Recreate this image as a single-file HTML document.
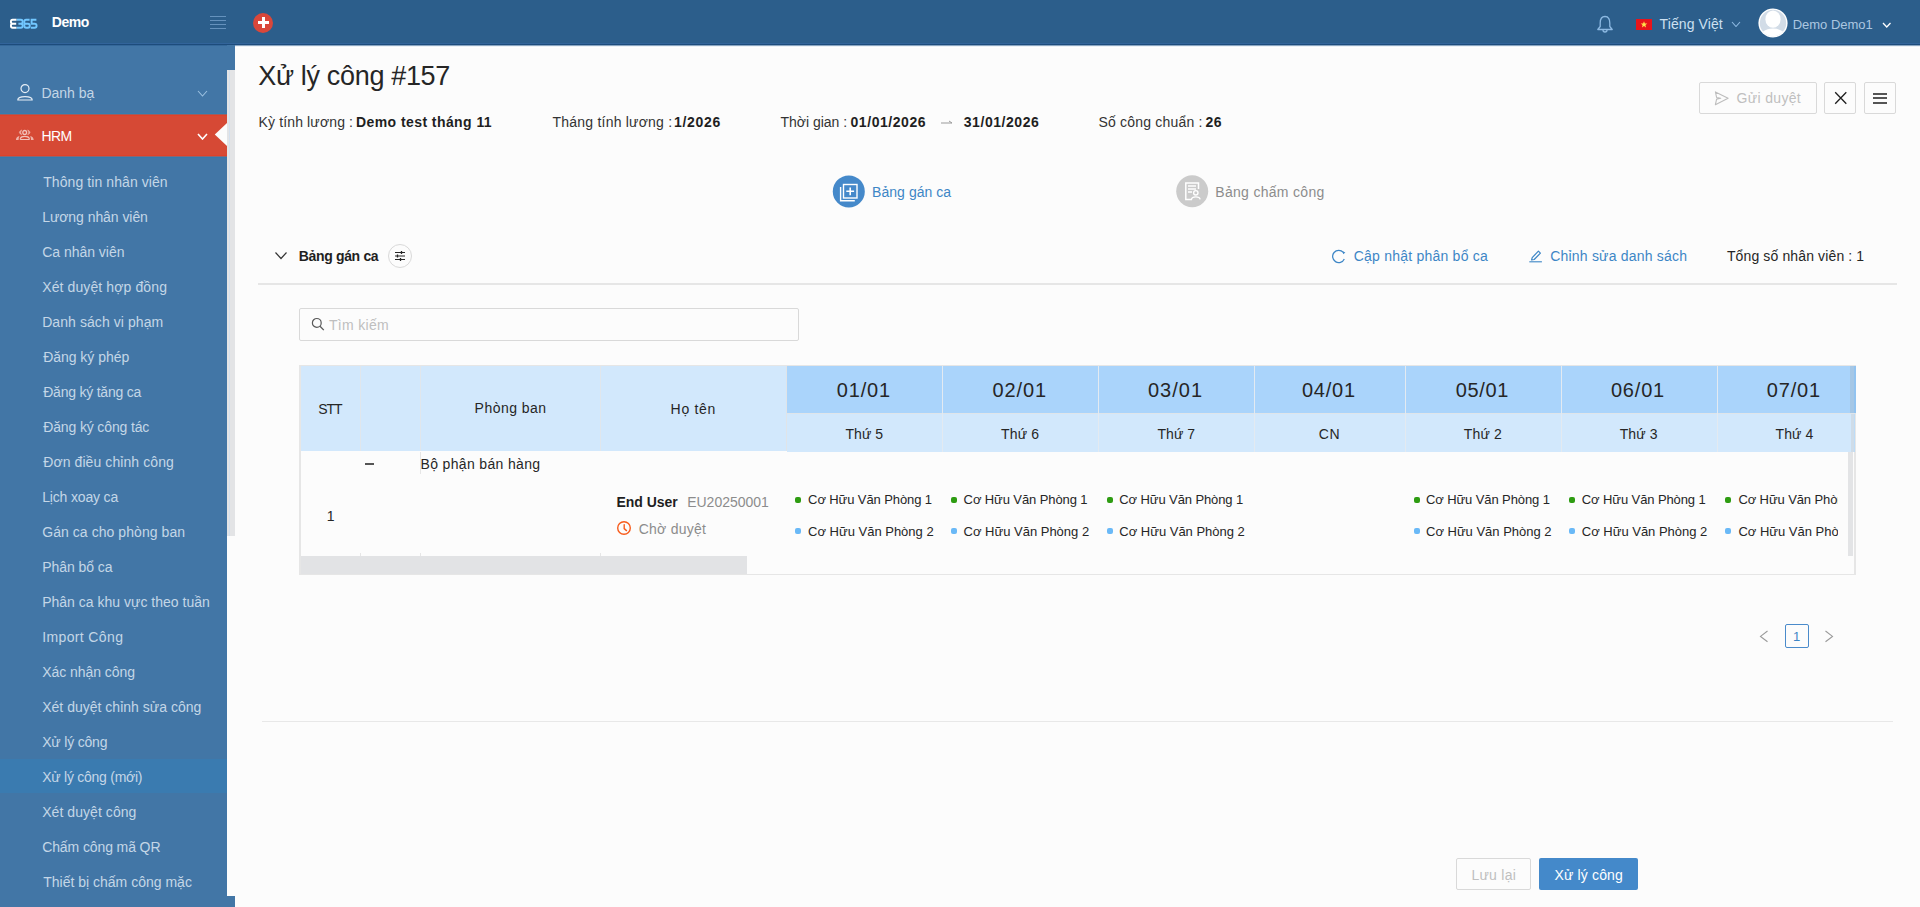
<!DOCTYPE html>
<html><head><meta charset="utf-8"><title>Xử lý công</title>
<style>
html,body{margin:0;padding:0}
body{width:1920px;height:907px;overflow:hidden;position:relative;background:#fcfcfc;font-family:"Liberation Sans",sans-serif}
.t{position:absolute;line-height:1;white-space:nowrap;font-family:"Liberation Sans",sans-serif}
</style></head><body>
<div style='position:absolute;left:0px;top:0px;width:1920px;height:45px;background:#2c5e8b;'></div>
<div style='position:absolute;left:0px;top:43px;width:1920px;height:1px;background:#32649a;'></div>
<div style='position:absolute;left:0px;top:44px;width:1920px;height:1px;background:#1d4c7c;'></div>
<div style='position:absolute;left:235px;top:45px;width:1685px;height:1px;background:#8aa6c2;'></div>
<div style='position:absolute;left:235px;top:46px;width:1685px;height:1px;background:#eef2f6;'></div>
<div style='position:absolute;left:235px;top:47px;width:1685px;height:1px;background:#ffffff;'></div>
<div style='position:absolute;left:0px;top:45px;width:227px;height:862px;background:#4276a6;'></div>
<div style='position:absolute;left:0px;top:45px;width:235px;height:1px;background:#34689a;'></div>
<div style='position:absolute;left:227px;top:45px;width:8px;height:25px;background:#4276a6;'></div>
<div style='position:absolute;left:227px;top:70px;width:8px;height:466px;background:#e3e4e6;'></div>
<div style='position:absolute;left:229px;top:70px;width:1px;height:466px;background:#d4e0ee;'></div>
<div style='position:absolute;left:227px;top:896px;width:8px;height:11px;background:#4276a6;'></div>
<div style='position:absolute;left:0px;top:114px;width:227px;height:43px;background:#d64935;'></div>
<div style='position:absolute;left:0px;top:113px;width:227px;height:1px;background:#347db0;'></div>
<div style='position:absolute;left:0px;top:114px;width:227px;height:1px;background:#9a5d62;'></div>
<div style='position:absolute;left:0px;top:115px;width:227px;height:1px;background:#e04129;'></div>
<div style='position:absolute;left:0px;top:155px;width:227px;height:1px;background:#e04129;'></div>
<div style='position:absolute;left:0px;top:156px;width:227px;height:1px;background:#8a6674;'></div>
<div style='position:absolute;left:0px;top:157px;width:227px;height:1px;background:#3479ae;'></div>
<div style='position:absolute;left:0px;top:759px;width:227px;height:34px;background:#3a7bb0;'></div>
<svg style='position:absolute;left:0;top:0' width='45' height='45' viewBox='0 0 45 45'>
<g fill='none' stroke-width='1.9'>
<path d='M16.6 19.7 L12.6 19.7 Q10.9 19.7 10.9 21.7 Q10.9 23.7 12.6 23.7 L16.2 23.7 M12.6 23.7 Q10.9 23.7 10.9 25.8 Q10.9 27.8 12.6 27.8 L16.6 27.8' stroke='#ffffff'/>
<path d='M16.8 19.7 L20.9 19.7 Q22.7 19.7 22.7 21.7 Q22.7 23.7 20.9 23.7 L18.4 23.7 M20.9 23.7 Q22.7 23.7 22.7 25.8 Q22.7 27.8 20.9 27.8 L16.8 27.8' stroke='#72c7ff'/>
<path d='M29.6 19.7 L26.1 19.7 Q24.3 19.7 24.3 21.8 L24.3 25.8 Q24.3 27.8 26.1 27.8 L27.9 27.8 Q29.8 27.8 29.8 25.8 Q29.8 23.7 27.9 23.7 L24.8 23.7' stroke='#72c7ff'/>
<path d='M36.4 19.7 L31.6 19.7 L31.6 23.7 L34.6 23.7 Q36.6 23.7 36.6 25.8 Q36.6 27.8 34.6 27.8 L30.8 27.8' stroke='#72c7ff'/>
</g></svg>
<div style='position:absolute;left:210px;top:16px;width:16px;height:1px;background:#6592bd;'></div>
<div style='position:absolute;left:210px;top:20px;width:16px;height:1px;background:#6592bd;'></div>
<div style='position:absolute;left:210px;top:24px;width:16px;height:1px;background:#6592bd;'></div>
<div style='position:absolute;left:210px;top:28px;width:16px;height:1px;background:#6592bd;'></div>
<div style='position:absolute;left:253px;top:12.5px;width:20px;height:20px;border-radius:50%;background:#d9473a'></div>
<div style='position:absolute;left:257.5px;top:21px;width:11px;height:3px;background:#fff;'></div>
<div style='position:absolute;left:261.5px;top:17px;width:3px;height:11px;background:#fff;'></div>
<svg style='position:absolute;left:1595.5px;top:15px' width='18' height='19' viewBox='0 0 18 19'>
<path d='M9 1.5 C5.2 1.5 4.2 4.8 4.2 8 L4.2 11.5 L1.8 14.5 L16.2 14.5 L13.8 11.5 L13.8 8 C13.8 4.8 12.8 1.5 9 1.5 Z' fill='none' stroke='#8db9e2' stroke-width='1.3' stroke-linejoin='round'/>
<path d='M7 15 A2 2 0 0 0 11 15' fill='none' stroke='#8db9e2' stroke-width='1.3'/>
</svg>
<div style='position:absolute;left:1636px;top:19px;width:16px;height:11px;background:#e8141b;'></div>
<svg style='position:absolute;left:1636px;top:19px' width='16' height='11' viewBox='0 0 16 11'><polygon points='8,2.2 8.9,4.6 11.3,4.6 9.4,6.1 10.1,8.5 8,7.1 5.9,8.5 6.6,6.1 4.7,4.6 7.1,4.6' fill='#ffe34a'/></svg>
<svg style='position:absolute;left:1730.5px;top:20.5px' width='10' height='6.5' viewBox='-1 -1 10 6.5'><polyline points='0,0 4.0,4.5 8,0' fill='none' stroke='#8db9e2' stroke-width='1.1'/></svg>
<svg style='position:absolute;left:1881.5px;top:21.5px' width='9.5' height='6' viewBox='-1 -1 9.5 6'><polyline points='0,0 3.75,4 7.5,0' fill='none' stroke='#ffffff' stroke-width='1.3'/></svg>
<svg style='position:absolute;left:1758px;top:8px' width='30' height='30' viewBox='0 0 30 30'>
<defs><clipPath id='av'><circle cx='15' cy='15' r='13.2'/></clipPath></defs>
<circle cx='15' cy='15' r='14.6' fill='#ffffff'/>
<circle cx='15' cy='15' r='13.2' fill='#d2dce7'/>
<g clip-path='url(#av)'>
<ellipse cx='15' cy='11.2' rx='7.6' ry='8.6' fill='#ffffff'/>
<ellipse cx='15' cy='31' rx='14' ry='10.5' fill='#ffffff'/>
</g>
</svg>
<svg style='position:absolute;left:16px;top:83px' width='19' height='19' viewBox='0 0 19 19'>
<circle cx='9' cy='5.6' r='4' fill='none' stroke='#e6eef6' stroke-width='1.2'/>
<path d='M1.8 17 C1.8 12.5 16.2 12.5 16.2 17 Z' fill='none' stroke='#e6eef6' stroke-width='1.2' stroke-linejoin='round'/>
</svg>
<svg style='position:absolute;left:15px;top:129px' width='20' height='13' viewBox='0 0 20 13'>
<circle cx='9.7' cy='3.4' r='1.9' fill='none' stroke='#f1c3bc' stroke-width='1.3'/>
<path d='M6.7 0.9 Q2.0 3.3 6.7 5.8 Q4.7 3.3 6.7 0.9 Z' fill='#eeb3aa' stroke='#eeb3aa' stroke-width='0.6'/>
<path d='M12.7 0.9 Q17.4 3.3 12.7 5.8 Q14.7 3.3 12.7 0.9 Z' fill='#eeb3aa' stroke='#eeb3aa' stroke-width='0.6'/>
<path d='M5.7 10.5 L13.9 10.5 C14.5 10.5 14.6 10 14.3 9.4 C13.6 7.9 11.8 7.4 9.8 7.4 C7.8 7.4 6 7.9 5.3 9.4 C5 10 5.1 10.5 5.7 10.5 Z' fill='none' stroke='#f1c3bc' stroke-width='1.1'/>
<path d='M4.4 6.9 C2.4 7.3 1 8.8 0.9 11 L3.6 11 C3.6 9.5 3.8 8 4.4 6.9 Z' fill='#eeb3aa'/>
<path d='M15.2 6.9 C17.2 7.3 18.6 8.8 18.7 11 L16 11 C16 9.5 15.8 8 15.2 6.9 Z' fill='#eeb3aa'/>
</svg>
<svg style='position:absolute;left:196.5px;top:89.5px' width='11' height='7' viewBox='-1 -1 11 7'><polyline points='0,0 4.5,5 9,0' fill='none' stroke='#9cc0e0' stroke-width='1.1'/></svg>
<svg style='position:absolute;left:196.5px;top:132.5px' width='11' height='7' viewBox='-1 -1 11 7'><polyline points='0,0 4.5,5 9,0' fill='none' stroke='#ffffff' stroke-width='1.6'/></svg>
<svg style='position:absolute;left:214px;top:123px' width='13' height='23' viewBox='0 0 13 23'><polygon points='0.8,11.5 13,0 13,23' fill='#fcfcfc'/></svg>
<div style='position:absolute;left:1699px;top:82px;width:118px;height:32px;box-sizing:border-box;background:#fcfcfc;border:1px solid #d9d9d9;border-radius:2px'></div>
<div style='position:absolute;left:1824px;top:82px;width:32px;height:32px;box-sizing:border-box;background:#fcfcfc;border:1px solid #d9d9d9;border-radius:2px'></div>
<div style='position:absolute;left:1864px;top:82px;width:32px;height:32px;box-sizing:border-box;background:#fcfcfc;border:1px solid #d9d9d9;border-radius:2px'></div>
<svg style='position:absolute;left:1713px;top:91px' width='17' height='16' viewBox='0 0 17 16'>
<path d='M2.4 0.9 L15.1 7.3 L2.4 13.7 L3.6 8.1 L7.7 7.3 L3.6 6.5 Z' fill='none' stroke='#bdbdbd' stroke-width='1.1' stroke-linejoin='round'/>
</svg>
<svg style='position:absolute;left:1834px;top:91px' width='14' height='14' viewBox='0 0 14 14'>
<path d='M1.2 1.2 L12.3 12.8 M12.3 1.2 L1.2 12.8' stroke='#1f1f1f' stroke-width='1.3'/></svg>
<div style='position:absolute;left:1873px;top:92.5px;width:14px;height:2px;background:#555555;'></div>
<div style='position:absolute;left:1873px;top:97px;width:14px;height:2px;background:#555555;'></div>
<div style='position:absolute;left:1873px;top:101.5px;width:14px;height:2px;background:#555555;'></div>
<svg style='position:absolute;left:940px;top:118px' width='14' height='8' viewBox='0 0 14 8'>
<path d='M1 5 L12 5 M9 3 L12 5' fill='none' stroke='#9a9a9a' stroke-width='1'/></svg>
<svg style='position:absolute;left:832px;top:175px' width='34' height='34' viewBox='0 0 34 34'>
<circle cx='16.8' cy='16.4' r='16' fill='#4589ca'/>
<rect x='11.5' y='9.5' width='13.5' height='13.5' fill='none' stroke='#fff' stroke-width='1.4'/>
<path d='M8.6 12 L8.6 25.8 L22.8 25.8' fill='none' stroke='#fff' stroke-width='1.4'/>
<path d='M18.2 12.4 L18.2 20.2 M14.3 16.3 L22.1 16.3' stroke='#fff' stroke-width='1.6'/>
</svg>
<svg style='position:absolute;left:1176px;top:175px' width='34' height='34' viewBox='0 0 34 34'>
<circle cx='16.2' cy='16.3' r='16' fill='#cbcbcb'/>
<path d='M16 24.5 L9.8 24.5 L9.8 8 L22.5 8 L22.5 14' fill='none' stroke='#fff' stroke-width='1.5'/>
<path d='M12 11 L20 11 M12 14 L20 14 M12 17 L16 17' stroke='#fff' stroke-width='1.4'/>
<circle cx='19.8' cy='17.8' r='2.2' fill='none' stroke='#fff' stroke-width='1.4'/>
<path d='M15.5 24.3 C16 21 23.6 21 24.1 24.3' fill='none' stroke='#fff' stroke-width='1.4'/>
</svg>
<svg style='position:absolute;left:274px;top:251px' width='14' height='9' viewBox='0 0 14 9'>
<polyline points='1.5,1.5 7,7.5 12.5,1.5' fill='none' stroke='#333' stroke-width='1.2'/></svg>
<div style='position:absolute;left:388px;top:244px;width:24px;height:24px;box-sizing:border-box;border:1px solid #d9d9d9;border-radius:50%'></div>
<svg style='position:absolute;left:394px;top:250px' width='12' height='12' viewBox='0 0 12 12'>
<path d='M1 2.5 L11 2.5 M1 6 L11 6 M1 9.5 L11 9.5' stroke='#262626' stroke-width='1'/>
<path d='M7.5 1 L7.5 4 M3.5 4.5 L3.5 7.5 M6.5 8 L6.5 11' stroke='#262626' stroke-width='1.3'/>
</svg>
<svg style='position:absolute;left:1330px;top:247px' width='17' height='17' viewBox='0 0 17 17'>
<path d='M13.3 5.4 A6.1 6.1 0 1 0 14.3 12' fill='none' stroke='#3d86c6' stroke-width='1.25'/>
<path d='M12.6 4.3 L15.4 5.6 L13.2 7.2 Z' fill='#3d86c6'/>
</svg>
<svg style='position:absolute;left:1528px;top:248px' width='15' height='15' viewBox='0 0 15 15'>
<path d='M4.2 9.6 L10.4 3.2 L12.4 5.2 L6.2 11.5 L3.6 11.9 Z' fill='none' stroke='#3d86c6' stroke-width='1.2' stroke-linejoin='round'/>
<path d='M1.3 13.8 L13.9 13.8' stroke='#3d86c6' stroke-width='1.1'/>
</svg>
<div style='position:absolute;left:258px;top:283px;width:1639px;height:2px;background:#e6e6e6;'></div>
<div style='position:absolute;left:299px;top:308px;width:500px;height:33px;box-sizing:border-box;border:1px solid #d9d9d9;border-radius:2px;background:#fcfcfc'></div>
<svg style='position:absolute;left:311px;top:317px' width='15' height='15' viewBox='0 0 15 15'>
<circle cx='5.8' cy='5.9' r='4.4' fill='none' stroke='#595959' stroke-width='1.2'/>
<path d='M9 9.2 L12.8 13.1' stroke='#595959' stroke-width='1.3'/>
</svg>
<div style='position:absolute;left:299px;top:365px;width:1557px;height:1px;background:#e6e6e6;'></div>
<div style='position:absolute;left:299px;top:365px;width:2px;height:210px;background:#e6e6e6;'></div>
<div style='position:absolute;left:301px;top:366px;width:486px;height:85px;background:#d2e8fc;'></div>
<div style='position:absolute;left:360px;top:366px;width:1px;height:85px;background:#e0e6ec;'></div>
<div style='position:absolute;left:420px;top:366px;width:1px;height:85px;background:#e0e6ec;'></div>
<div style='position:absolute;left:600px;top:366px;width:1px;height:85px;background:#e0e6ec;'></div>
<div style='position:absolute;left:786px;top:366px;width:1px;height:86px;background:#e0e4e8;'></div>
<div style='position:absolute;left:787px;top:366px;width:1069px;height:47px;background:#aad4fb;'></div>
<div style='position:absolute;left:787px;top:413px;width:1069px;height:1px;background:#dfe5ea;'></div>
<div style='position:absolute;left:787px;top:414px;width:1069px;height:38px;background:#d2e8fc;'></div>
<div style='position:absolute;left:942px;top:366px;width:1px;height:86px;background:#e3eaf1;'></div>
<div style='position:absolute;left:1098px;top:366px;width:1px;height:86px;background:#e3eaf1;'></div>
<div style='position:absolute;left:1254px;top:366px;width:1px;height:86px;background:#e3eaf1;'></div>
<div style='position:absolute;left:1405px;top:366px;width:1px;height:86px;background:#e3eaf1;'></div>
<div style='position:absolute;left:1561px;top:366px;width:1px;height:86px;background:#e3eaf1;'></div>
<div style='position:absolute;left:1717px;top:366px;width:1px;height:86px;background:#e3eaf1;'></div>
<div style='position:absolute;left:1850px;top:366px;width:4px;height:47px;background:#a5c7e6;'></div>
<div style='position:absolute;left:1854px;top:366px;width:2px;height:47px;background:#92c3f0;'></div>
<div style='position:absolute;left:1851px;top:414px;width:3px;height:38px;background:#cfdce8;'></div>
<div style='position:absolute;left:1854px;top:414px;width:1px;height:38px;background:#bcdcf8;'></div>
<div style='position:absolute;left:1855px;top:414px;width:1px;height:38px;background:#e6e6e6;'></div>
<div style='position:absolute;left:301px;top:451px;width:486px;height:1px;background:#fcfcfc;'></div>
<div style='position:absolute;left:301px;top:452px;width:1549px;height:104px;background:#fcfcfc;'></div>
<div style='position:absolute;left:420px;top:452px;width:1px;height:22px;background:#e6e6e6;'></div>
<div style='position:absolute;left:360px;top:553px;width:1px;height:3px;background:#e6e6e6;'></div>
<div style='position:absolute;left:420px;top:553px;width:1px;height:3px;background:#e6e6e6;'></div>
<div style='position:absolute;left:600px;top:553px;width:1px;height:3px;background:#e6e6e6;'></div>
<div style='position:absolute;left:1848px;top:452px;width:5px;height:104px;background:#e3e4e6;'></div>
<div style='position:absolute;left:1854px;top:452px;width:2px;height:123px;background:#e6e6e6;'></div>
<div style='position:absolute;left:301px;top:556px;width:446px;height:18px;background:#e2e3e5;'></div>
<div style='position:absolute;left:299px;top:574px;width:1557px;height:1px;background:#e6e6e6;'></div>
<div style='position:absolute;left:365px;top:463px;width:9px;height:2px;background:#555;'></div>
<svg style='position:absolute;left:616px;top:520px' width='16' height='16' viewBox='0 0 16 16'>
<circle cx='8' cy='8' r='6.3' fill='none' stroke='#f85c1c' stroke-width='1.4'/>
<path d='M8.2 4.6 L8.2 8.6 L10.5 10.6' fill='none' stroke='#f85c1c' stroke-width='1.4' stroke-linecap='round'/>
</svg>
<div style='position:absolute;left:794.7px;top:496.6px;width:6px;height:6px;border-radius:2px;background:#2e9c12'></div>
<div style='position:absolute;left:794.7px;top:528.4px;width:6px;height:6px;border-radius:2px;background:#6ab9f7'></div>
<div style='position:absolute;left:950.8px;top:496.6px;width:6px;height:6px;border-radius:2px;background:#2e9c12'></div>
<div style='position:absolute;left:950.8px;top:528.4px;width:6px;height:6px;border-radius:2px;background:#6ab9f7'></div>
<div style='position:absolute;left:1107.0px;top:496.6px;width:6px;height:6px;border-radius:2px;background:#2e9c12'></div>
<div style='position:absolute;left:1107.0px;top:528.4px;width:6px;height:6px;border-radius:2px;background:#6ab9f7'></div>
<div style='position:absolute;left:1413.5px;top:496.6px;width:6px;height:6px;border-radius:2px;background:#2e9c12'></div>
<div style='position:absolute;left:1413.5px;top:528.4px;width:6px;height:6px;border-radius:2px;background:#6ab9f7'></div>
<div style='position:absolute;left:1569.4px;top:496.6px;width:6px;height:6px;border-radius:2px;background:#2e9c12'></div>
<div style='position:absolute;left:1569.4px;top:528.4px;width:6px;height:6px;border-radius:2px;background:#6ab9f7'></div>
<div style='position:absolute;left:1725.2px;top:496.6px;width:6px;height:6px;border-radius:2px;background:#2e9c12'></div>
<div style='position:absolute;left:1725.2px;top:528.4px;width:6px;height:6px;border-radius:2px;background:#6ab9f7'></div>
<div style='position:absolute;left:1784.5px;top:624.3px;width:24px;height:24px;box-sizing:border-box;border:1px solid #4a8bcb;border-radius:2px'></div>
<svg style='position:absolute;left:1759px;top:630px' width='11' height='13' viewBox='0 0 11 13'>
<polyline points='8.5,1 1.5,6.4 8.5,11.8' fill='none' stroke='#9a9a9a' stroke-width='1.1'/></svg>
<svg style='position:absolute;left:1824px;top:630px' width='11' height='13' viewBox='0 0 11 13'>
<polyline points='1.5,1 8.5,6.4 1.5,11.8' fill='none' stroke='#9a9a9a' stroke-width='1.1'/></svg>
<div style='position:absolute;left:262px;top:721px;width:1631px;height:1px;background:#e8e8e8;'></div>
<div style='position:absolute;left:1456px;top:858px;width:75px;height:32px;box-sizing:border-box;background:#fcfcfc;border:1px solid #d9d9d9;border-radius:2px'></div>
<div style='position:absolute;left:1539px;top:858px;width:99px;height:32px;background:#4489ca;border-radius:2px'></div>
<div class='t' style='left:51.80px;top:15.20px;font-size:14px;font-weight:700;color:#ffffff;letter-spacing:-0.467px'>Demo</div>
<div class='t' style='left:1659.60px;top:17.20px;font-size:14px;font-weight:400;color:#cde0f1;letter-spacing:0.100px'>Tiếng Việt</div>
<div class='t' style='left:1792.75px;top:17.75px;font-size:13px;font-weight:400;color:#abc7e1;letter-spacing:-0.028px'>Demo Demo1</div>
<div class='t' style='left:41.40px;top:86.10px;font-size:14px;font-weight:400;color:#c4d6e7;letter-spacing:0.000px'>Danh bạ</div>
<div class='t' style='left:41.40px;top:129.00px;font-size:14px;font-weight:400;color:#ffffff;letter-spacing:-0.550px'>HRM</div>
<div class='t' style='left:43.20px;top:175.00px;font-size:14px;font-weight:400;color:#c4d6e7;letter-spacing:0.083px'>Thông tin nhân viên</div>
<div class='t' style='left:42.20px;top:210.00px;font-size:14px;font-weight:400;color:#c4d6e7;letter-spacing:-0.057px'>Lương nhân viên</div>
<div class='t' style='left:42.20px;top:245.00px;font-size:14px;font-weight:400;color:#c4d6e7;letter-spacing:-0.018px'>Ca nhân viên</div>
<div class='t' style='left:42.20px;top:280.00px;font-size:14px;font-weight:400;color:#c4d6e7;letter-spacing:0.112px'>Xét duyệt hợp đồng</div>
<div class='t' style='left:42.20px;top:315.00px;font-size:14px;font-weight:400;color:#c4d6e7;letter-spacing:0.075px'>Danh sách vi phạm</div>
<div class='t' style='left:43.20px;top:350.00px;font-size:14px;font-weight:400;color:#c4d6e7;letter-spacing:-0.036px'>Đăng ký phép</div>
<div class='t' style='left:43.20px;top:385.00px;font-size:14px;font-weight:400;color:#c4d6e7;letter-spacing:-0.221px'>Đăng ký tăng ca</div>
<div class='t' style='left:43.20px;top:420.00px;font-size:14px;font-weight:400;color:#c4d6e7;letter-spacing:-0.133px'>Đăng ký công tác</div>
<div class='t' style='left:43.20px;top:455.00px;font-size:14px;font-weight:400;color:#c4d6e7;letter-spacing:0.089px'>Đơn điều chỉnh công</div>
<div class='t' style='left:42.20px;top:490.00px;font-size:14px;font-weight:400;color:#c4d6e7;letter-spacing:-0.164px'>Lịch xoay ca</div>
<div class='t' style='left:42.20px;top:525.00px;font-size:14px;font-weight:400;color:#c4d6e7;letter-spacing:0.063px'>Gán ca cho phòng ban</div>
<div class='t' style='left:42.20px;top:560.00px;font-size:14px;font-weight:400;color:#c4d6e7;letter-spacing:-0.067px'>Phân bổ ca</div>
<div class='t' style='left:42.20px;top:595.00px;font-size:14px;font-weight:400;color:#c4d6e7;letter-spacing:0.008px'>Phân ca khu vực theo tuần</div>
<div class='t' style='left:42.20px;top:630.00px;font-size:14px;font-weight:400;color:#c4d6e7;letter-spacing:0.370px'>Import Công</div>
<div class='t' style='left:42.20px;top:665.00px;font-size:14px;font-weight:400;color:#c4d6e7;letter-spacing:-0.050px'>Xác nhận công</div>
<div class='t' style='left:42.20px;top:700.00px;font-size:14px;font-weight:400;color:#c4d6e7;letter-spacing:0.013px'>Xét duyệt chỉnh sửa công</div>
<div class='t' style='left:42.20px;top:735.00px;font-size:14px;font-weight:400;color:#c4d6e7;letter-spacing:-0.189px'>Xử lý công</div>
<div class='t' style='left:42.20px;top:770.00px;font-size:14px;font-weight:400;color:#c4d6e7;letter-spacing:-0.253px'>Xử lý công (mới)</div>
<div class='t' style='left:42.20px;top:805.00px;font-size:14px;font-weight:400;color:#c4d6e7;letter-spacing:0.062px'>Xét duyệt công</div>
<div class='t' style='left:42.20px;top:840.00px;font-size:14px;font-weight:400;color:#c4d6e7;letter-spacing:-0.107px'>Chấm công mã QR</div>
<div class='t' style='left:43.20px;top:875.00px;font-size:14px;font-weight:400;color:#c4d6e7;letter-spacing:0.005px'>Thiết bị chấm công mặc</div>
<div class='t' style='left:258.30px;top:63.00px;font-size:27px;font-weight:400;color:#262626;letter-spacing:-0.336px'>Xử lý công #157</div>
<div class='t' style='left:258.50px;top:115.00px;font-size:14px;font-weight:400;color:#333333;letter-spacing:0.143px'>Kỳ tính lương :</div>
<div class='t' style='left:356.00px;top:115.00px;font-size:14px;font-weight:700;color:#1f1f1f;letter-spacing:0.426px'>Demo test tháng 11</div>
<div class='t' style='left:552.50px;top:115.00px;font-size:14px;font-weight:400;color:#333333;letter-spacing:0.221px'>Tháng tính lương :</div>
<div class='t' style='left:674.00px;top:115.00px;font-size:14px;font-weight:700;color:#1f1f1f;letter-spacing:0.700px'>1/2026</div>
<div class='t' style='left:780.50px;top:115.00px;font-size:14px;font-weight:400;color:#333333;letter-spacing:-0.025px'>Thời gian :</div>
<div class='t' style='left:850.50px;top:115.00px;font-size:14px;font-weight:700;color:#1f1f1f;letter-spacing:0.556px'>01/01/2026</div>
<div class='t' style='left:963.75px;top:115.00px;font-size:14px;font-weight:700;color:#1f1f1f;letter-spacing:0.556px'>31/01/2026</div>
<div class='t' style='left:1098.50px;top:115.00px;font-size:14px;font-weight:400;color:#333333;letter-spacing:0.196px'>Số công chuẩn :</div>
<div class='t' style='left:1205.50px;top:115.00px;font-size:14px;font-weight:700;color:#1f1f1f;letter-spacing:0.500px'>26</div>
<div class='t' style='left:1736.60px;top:91.10px;font-size:14px;font-weight:400;color:#bfbfbf;letter-spacing:0.325px'>Gửi duyệt</div>
<div class='t' style='left:872.10px;top:184.60px;font-size:14px;font-weight:400;color:#3d86c6;letter-spacing:0.040px'>Bảng gán ca</div>
<div class='t' style='left:1215.25px;top:184.70px;font-size:14px;font-weight:400;color:#8c8c8c;letter-spacing:0.308px'>Bảng chấm công</div>
<div class='t' style='left:298.70px;top:248.90px;font-size:14px;font-weight:700;color:#1f1f1f;letter-spacing:-0.330px'>Bảng gán ca</div>
<div class='t' style='left:1353.70px;top:248.60px;font-size:14px;font-weight:400;color:#3d86c6;letter-spacing:0.228px'>Cập nhật phân bổ ca</div>
<div class='t' style='left:1550.20px;top:248.60px;font-size:14px;font-weight:400;color:#3d86c6;letter-spacing:0.206px'>Chỉnh sửa danh sách</div>
<div class='t' style='left:1726.90px;top:248.60px;font-size:14px;font-weight:400;color:#262626;letter-spacing:0.130px'>Tổng số nhân viên : 1</div>
<div class='t' style='left:329.00px;top:317.90px;font-size:14px;font-weight:400;color:#bfbfbf;letter-spacing:0.300px'>Tìm kiếm</div>
<div class='t' style='left:318.20px;top:401.60px;font-size:14px;font-weight:400;color:#262626;letter-spacing:-1.100px'>STT</div>
<div class='t' style='left:474.60px;top:401.20px;font-size:14px;font-weight:400;color:#262626;letter-spacing:0.475px'>Phòng ban</div>
<div class='t' style='left:670.60px;top:401.60px;font-size:14px;font-weight:400;color:#262626;letter-spacing:0.680px'>Họ tên</div>
<div class='t' style='left:836.80px;top:379.80px;font-size:20px;font-weight:400;color:#262626;letter-spacing:0.800px'>01/01</div>
<div class='t' style='left:992.50px;top:379.80px;font-size:20px;font-weight:400;color:#262626;letter-spacing:0.875px'>02/01</div>
<div class='t' style='left:1148.00px;top:379.80px;font-size:20px;font-weight:400;color:#262626;letter-spacing:1.000px'>03/01</div>
<div class='t' style='left:1302.00px;top:379.80px;font-size:20px;font-weight:400;color:#262626;letter-spacing:0.750px'>04/01</div>
<div class='t' style='left:1455.75px;top:379.80px;font-size:20px;font-weight:400;color:#262626;letter-spacing:0.663px'>05/01</div>
<div class='t' style='left:1610.90px;top:379.80px;font-size:20px;font-weight:400;color:#262626;letter-spacing:0.825px'>06/01</div>
<div class='t' style='left:1766.70px;top:379.80px;font-size:20px;font-weight:400;color:#262626;letter-spacing:0.850px'>07/01</div>
<div class='t' style='left:845.40px;top:426.60px;font-size:14px;font-weight:400;color:#262626;letter-spacing:0.075px'>Thứ 5</div>
<div class='t' style='left:1001.00px;top:426.60px;font-size:14px;font-weight:400;color:#262626;letter-spacing:0.175px'>Thứ 6</div>
<div class='t' style='left:1157.40px;top:426.60px;font-size:14px;font-weight:400;color:#262626;letter-spacing:0.075px'>Thứ 7</div>
<div class='t' style='left:1318.70px;top:426.60px;font-size:14px;font-weight:400;color:#262626;letter-spacing:0.800px'>CN</div>
<div class='t' style='left:1463.80px;top:426.60px;font-size:14px;font-weight:400;color:#262626;letter-spacing:0.150px'>Thứ 2</div>
<div class='t' style='left:1619.70px;top:426.60px;font-size:14px;font-weight:400;color:#262626;letter-spacing:0.125px'>Thứ 3</div>
<div class='t' style='left:1775.50px;top:426.60px;font-size:14px;font-weight:400;color:#262626;letter-spacing:0.125px'>Thứ 4</div>
<div class='t' style='left:420.50px;top:456.70px;font-size:14px;font-weight:400;color:#262626;letter-spacing:0.347px'>Bộ phận bán hàng</div>
<div class='t' style='left:326.80px;top:508.70px;font-size:14px;font-weight:400;color:#262626;letter-spacing:0.000px'>1</div>
<div class='t' style='left:616.60px;top:495.00px;font-size:14px;font-weight:700;color:#1f1f1f;letter-spacing:-0.057px'>End User</div>
<div class='t' style='left:687.20px;top:495.00px;font-size:14px;font-weight:400;color:#8c8c8c;letter-spacing:-0.011px'>EU20250001</div>
<div class='t' style='left:638.70px;top:521.50px;font-size:14px;font-weight:400;color:#8c8c8c;letter-spacing:0.262px'>Chờ duyệt</div>
<div class='t' style='left:808.10px;top:493.40px;font-size:13px;font-weight:400;color:#262626;letter-spacing:-0.100px'>Cơ Hữu Văn Phòng 1</div>
<div class='t' style='left:808.10px;top:525.40px;font-size:13px;font-weight:400;color:#262626;letter-spacing:-0.006px'>Cơ Hữu Văn Phòng 2</div>
<div class='t' style='left:963.60px;top:493.40px;font-size:13px;font-weight:400;color:#262626;letter-spacing:-0.100px'>Cơ Hữu Văn Phòng 1</div>
<div class='t' style='left:963.60px;top:525.40px;font-size:13px;font-weight:400;color:#262626;letter-spacing:-0.006px'>Cơ Hữu Văn Phòng 2</div>
<div class='t' style='left:1119.30px;top:493.40px;font-size:13px;font-weight:400;color:#262626;letter-spacing:-0.100px'>Cơ Hữu Văn Phòng 1</div>
<div class='t' style='left:1119.30px;top:525.40px;font-size:13px;font-weight:400;color:#262626;letter-spacing:-0.006px'>Cơ Hữu Văn Phòng 2</div>
<div class='t' style='left:1426.00px;top:493.40px;font-size:13px;font-weight:400;color:#262626;letter-spacing:-0.100px'>Cơ Hữu Văn Phòng 1</div>
<div class='t' style='left:1426.00px;top:525.40px;font-size:13px;font-weight:400;color:#262626;letter-spacing:-0.006px'>Cơ Hữu Văn Phòng 2</div>
<div class='t' style='left:1581.80px;top:493.40px;font-size:13px;font-weight:400;color:#262626;letter-spacing:-0.100px'>Cơ Hữu Văn Phòng 1</div>
<div class='t' style='left:1581.80px;top:525.40px;font-size:13px;font-weight:400;color:#262626;letter-spacing:-0.006px'>Cơ Hữu Văn Phòng 2</div>
<div class='t' style='left:1738.40px;top:493.40px;font-size:13px;font-weight:400;color:#262626;letter-spacing:-0.100px;width:100.1px;overflow:hidden'>Cơ Hữu Văn Phòng 1</div>
<div class='t' style='left:1738.40px;top:525.40px;font-size:13px;font-weight:400;color:#262626;letter-spacing:-0.006px;width:100.1px;overflow:hidden'>Cơ Hữu Văn Phòng 2</div>
<div class='t' style='left:1793.00px;top:630.00px;font-size:13px;font-weight:400;color:#3d86c6;letter-spacing:0.000px'>1</div>
<div class='t' style='left:1471.40px;top:867.70px;font-size:14px;font-weight:400;color:#bfbfbf;letter-spacing:0.283px'>Lưu lại</div>
<div class='t' style='left:1554.40px;top:867.70px;font-size:14px;font-weight:400;color:#ffffff;letter-spacing:0.167px'>Xử lý công</div>
</body></html>
